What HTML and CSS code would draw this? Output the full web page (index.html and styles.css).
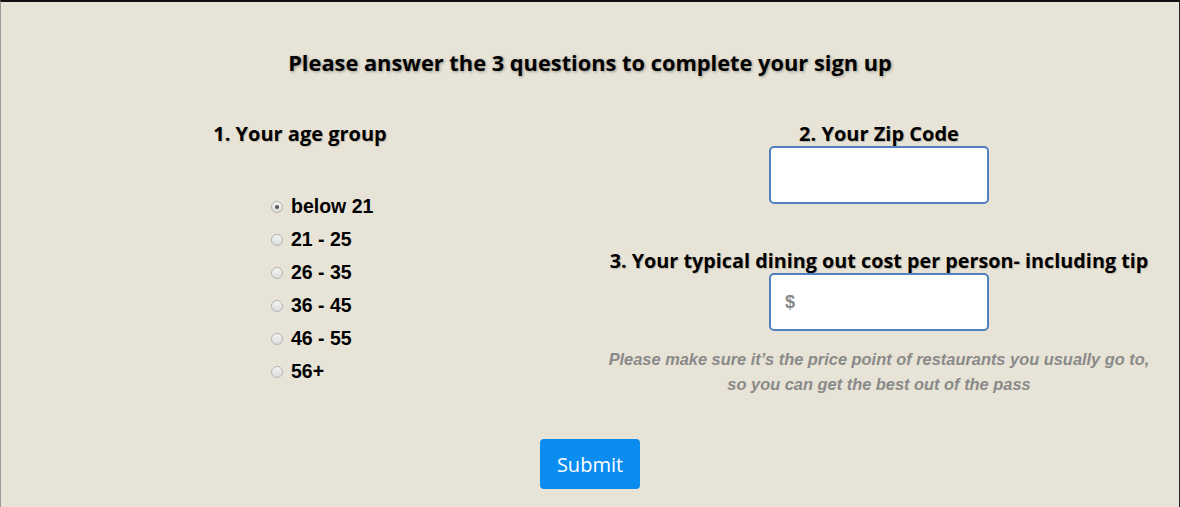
FILE: index.html
```html
<!DOCTYPE html>
<html>
<head>
<meta charset="utf-8">
<link rel="stylesheet" href="styles.css">
</head>
<body>
<div class="page">
  <h1 class="title">Please answer the 3 questions to complete your sign up</h1>
  <div class="cols">
    <div class="col col-left">
      <h2 class="q">1. Your age group</h2>
      <ul class="radios">
        <li><label><input type="radio" name="age" checked><span>below 21</span></label></li>
        <li><label><input type="radio" name="age"><span>21 - 25</span></label></li>
        <li><label><input type="radio" name="age"><span>26 - 35</span></label></li>
        <li><label><input type="radio" name="age"><span>36 - 45</span></label></li>
        <li><label><input type="radio" name="age"><span>46 - 55</span></label></li>
        <li><label><input type="radio" name="age"><span>56+</span></label></li>
      </ul>
    </div>
    <div class="col col-right">
      <h2 class="q">2. Your Zip Code</h2>
      <input class="field" type="text">
      <h2 class="q q3">3. Your typical dining out cost per person- including tip</h2>
      <input class="field" type="text" placeholder="$">
      <p class="note">Please make sure it’s the price point of restaurants you usually go to,<br>so you can get the best out of the pass</p>
    </div>
  </div>
  <div class="actions"><button class="submit" type="button">Submit</button></div>
</div>
</body>
</html>
```
FILE: styles.css
```css
html, body { margin: 0; padding: 0; }
body { background: #e7e3d6; font-family: "Open Sans", sans-serif; }
.page {
  width: 1180px;
  height: 507px;
  box-sizing: border-box;
  border-top: 2px solid #111;
  border-left: 1px solid #9a9a9a;
  border-right: 1px solid #222;
  background: #e7e3d6;
  padding-top: 47px;
  overflow: hidden;
}
.title {
  margin: 0;
  text-align: center;
  font-size: 21.8px;
  line-height: 27px;
  font-weight: 700;
  color: #000;
  text-shadow: 1px 1px 3px rgba(0,0,0,0.35);
}
.cols {
  display: grid;
  grid-template-columns: 598px 560px;
  margin-top: 46px;
}
.col { display: flex; flex-direction: column; }
.col-right { align-items: center; }
.q {
  margin: 0;
  font-size: 20px;
  line-height: 24px;
  font-weight: 700;
  color: #000;
  text-align: center;
  text-shadow: 1px 1px 1px rgba(0,0,0,0.2);
  white-space: nowrap;
}
.radios {
  list-style: none;
  margin: 44px 0 0 270px;
  padding: 0;
  font-family: "Liberation Sans", Arial, sans-serif;
  font-size: 19.5px;
  font-weight: 700;
}
.radios li { height: 33px; display: flex; align-items: center; }
.radios label { display: flex; align-items: center; gap: 8px; color: #000; }
.radios input {
  appearance: none;
  -webkit-appearance: none;
  margin: 0;
  width: 12px;
  height: 12px;
  border-radius: 50%;
  border: 1px solid #b3b3b3;
  background: linear-gradient(#f4f4f4, #dcdcdc);
  box-sizing: border-box;
  display: grid;
  place-items: center;
}
.radios input:checked::after {
  content: "";
  width: 4px;
  height: 4px;
  border-radius: 50%;
  background: #555;
}
.field {
  box-sizing: border-box;
  width: 220px;
  height: 58px;
  margin-top: 0;
  border: 2px solid #5080c0;
  border-radius: 5px;
  background: #fff;
  padding: 0 14px;
  font-family: "Liberation Sans", Arial, sans-serif;
  font-size: 18px;
  font-weight: 700;
  outline: none;
}
.field::placeholder { color: #888; }
.q3 { margin-top: 45px; font-size: 19.8px; }
.note {
  margin: 16px 0 0;
  text-align: center;
  font-family: "Liberation Sans", Arial, sans-serif;
  font-style: italic;
  font-weight: 700;
  font-size: 16.4px;
  line-height: 25px;
  color: #8a8a8a;
  white-space: nowrap;
}
.actions { display: flex; justify-content: center; margin-top: 42px; }
.submit {
  width: 100px;
  height: 50px;
  border: none;
  border-radius: 4px;
  background: #0a8cf0;
  color: #fff;
  font-family: "Open Sans", sans-serif;
  font-size: 20px;
  padding: 0;
}
```
